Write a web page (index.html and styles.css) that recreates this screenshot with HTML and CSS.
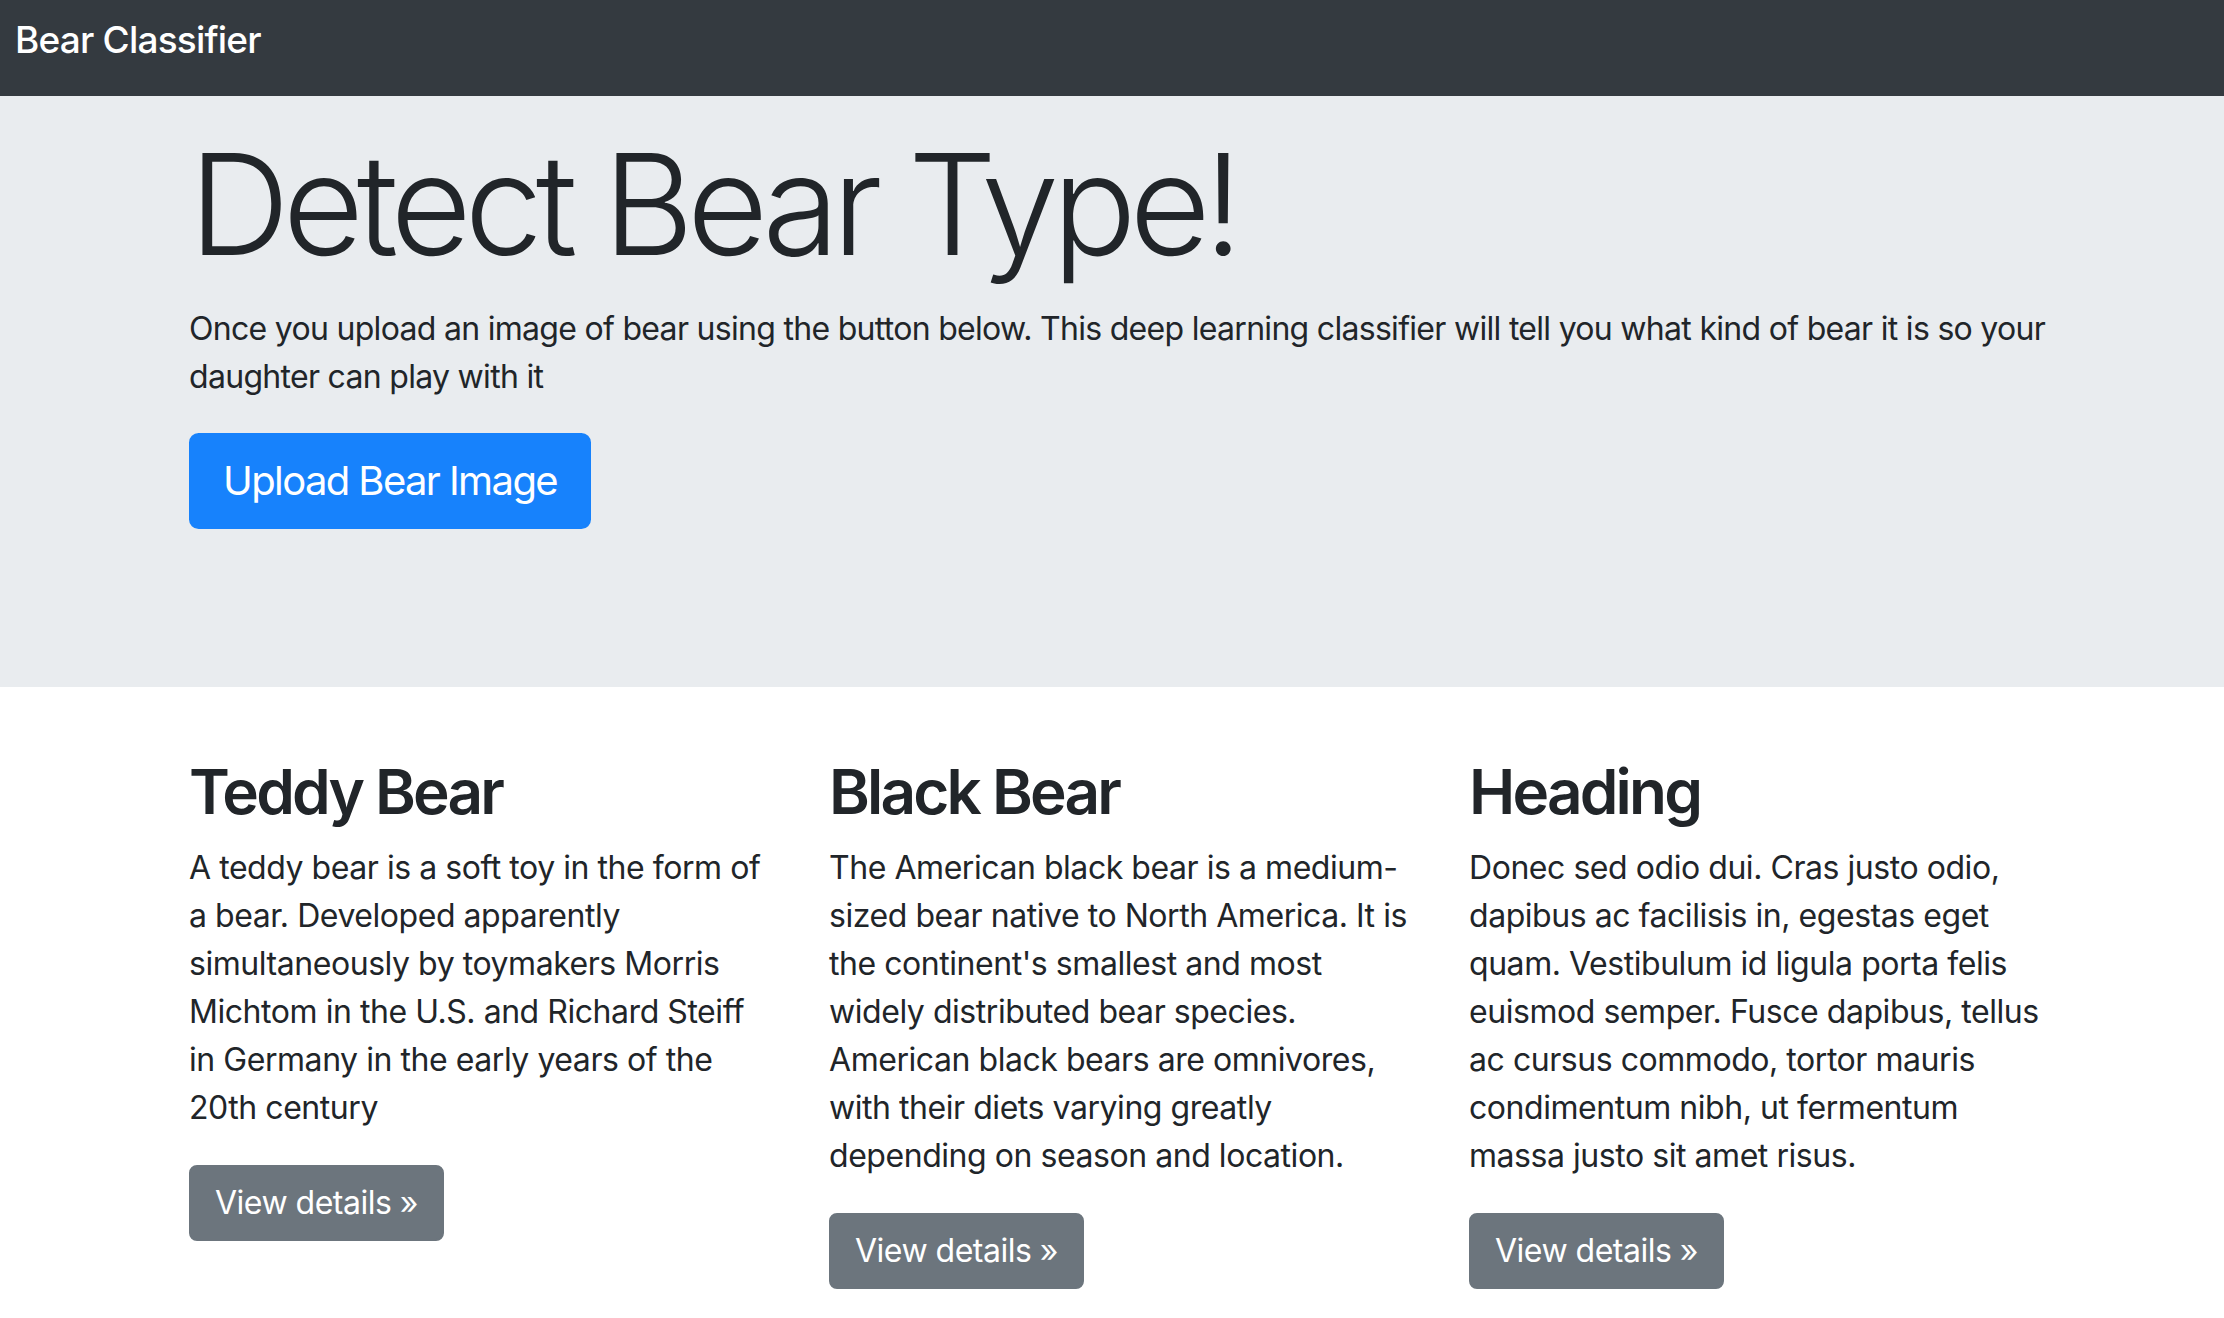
FILE: index.html
```html
<!DOCTYPE html>
<html lang="en">
<head>
<meta charset="utf-8">
<title>Bear Classifier</title>
<link rel="stylesheet" href="styles.css">
</head>
<body>
<nav class="navbar">
  <a class="brand" href="#">Bear Classifier</a>
</nav>
<main>
  <section class="jumbotron">
    <div class="container">
      <h1 class="display">Detect Bear Type!</h1>
      <p class="text lead-text">Once you upload an image of bear using the button below. This deep learning classifier will tell you what kind of bear it is so your daughter can play with it</p>
      <p class="actions"><a class="btn btn-primary btn-lg" href="#">Upload Bear Image</a></p>
    </div>
  </section>
  <div class="container">
    <div class="row">
      <div class="col">
        <h2 class="col-title">Teddy Bear</h2>
        <p class="text">A teddy bear is a soft toy in the form of a bear. Developed apparently simultaneously by toymakers Morris Michtom in the U.S. and Richard Steiff in Germany in the early years of the 20th century</p>
        <p class="actions"><a class="btn btn-secondary" href="#">View details &raquo;</a></p>
      </div>
      <div class="col">
        <h2 class="col-title">Black Bear</h2>
        <p class="text">The American black bear is a medium-sized bear native to North America. It is the continent's smallest and most widely distributed bear species. American black bears are omnivores, with their diets varying greatly depending on season and location.</p>
        <p class="actions"><a class="btn btn-secondary" href="#">View details &raquo;</a></p>
      </div>
      <div class="col">
        <h2 class="col-title">Heading</h2>
        <p class="text">Donec sed odio dui. Cras justo odio, dapibus ac facilisis in, egestas eget quam. Vestibulum id ligula porta felis euismod semper. Fusce dapibus, tellus ac cursus commodo, tortor mauris condimentum nibh, ut fermentum massa justo sit amet risus.</p>
        <p class="actions"><a class="btn btn-secondary" href="#">View details &raquo;</a></p>
      </div>
    </div>
  </div>
</main>
</body>
</html>
```
FILE: styles.css
```css
* { box-sizing: border-box; }
html, body { margin: 0; padding: 0; }
body {
  font-family: Inter, "Noto Sans", "Liberation Sans", sans-serif;
  font-size: 32px;
  line-height: 48px;
  color: #212529;
  background: #fff;
  overflow: hidden;
}
.navbar {
  height: 96px;
  background: #343a40;
  padding: 22px 15px 0;
  display: flex;
  align-items: flex-start;
}
.brand {
  color: #fff;
  text-decoration: none;
  font-size: 37px;
  line-height: 36px;
  font-weight: 500;
  letter-spacing: -0.8px;
}
.container {
  width: 1920px;
  margin-left: 159px;
  padding: 0 30px;
}
.jumbotron {
  background: #e9ecef;
  padding: 22px 0 158px;
  margin-bottom: 67px;
}
.display {
  margin: 0 0 14px;
  font-size: 140px;
  line-height: 172.8px;
  font-weight: 300;
  letter-spacing: -7px;
}
.text {
  margin: 0 0 32px;
  letter-spacing: -0.45px;
}
.lead-text { letter-spacing: -0.7px; }
.actions { margin: 0; }
.btn {
  display: inline-block;
  text-decoration: none;
  color: #fff;
  border: 2px solid transparent;
  font-weight: 400;
}
.btn-lg {
  font-size: 40px;
  line-height: 60px;
  padding: 16px 32px;
  border-radius: 9.6px;
  letter-spacing: -1.6px;
}
.btn-primary { background: #1782fc; border-color: #1782fc; }
.btn-secondary {
  background: #6c757d;
  border-color: #6c757d;
  padding: 12px 24px;
  border-radius: 8px;
  letter-spacing: -0.5px;
}
.row {
  display: grid;
  grid-template-columns: repeat(3, 1fr);
  margin: 0 -30px;
}
.col { padding: 0 30px; }
.col-title {
  margin: 0 0 13px;
  font-size: 62px;
  line-height: 76.8px;
  font-weight: 600;
  letter-spacing: -2.8px;
}
.col .text { margin-bottom: 33px; }
```
